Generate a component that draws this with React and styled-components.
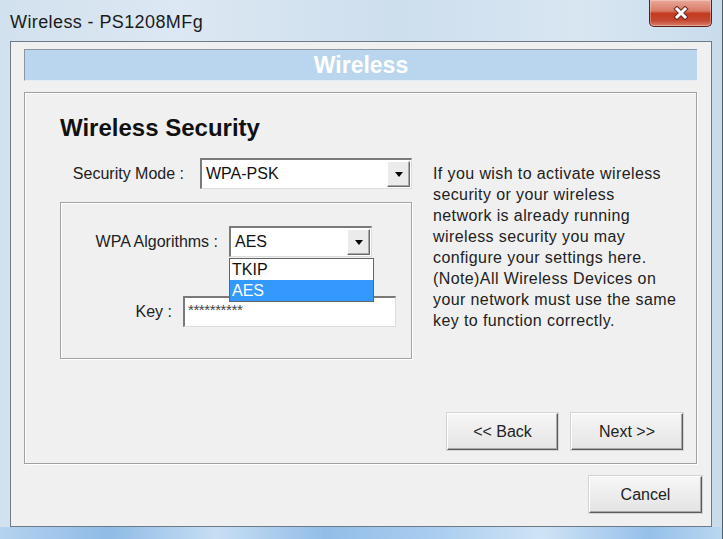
import React from 'react';
import styled, { createGlobalStyle } from 'styled-components';

const Global = createGlobalStyle`
  body {
    margin: 0;
    background: #ffffff;
  }
`;

const Window = styled.div`
  width: 723px;
  height: 539px;
  box-sizing: border-box;
  display: flex;
  flex-direction: column;
  overflow: hidden;
  border-right: 1px solid #55606b;
  background: linear-gradient(90deg, #d2e1ee 0%, #dce8f3 25%, #cddeed 55%, #d8e6f2 80%, #c9dcec 100%);
  font-family: "Liberation Sans", Arial, sans-serif;
`;

const TitleBar = styled.div`
  height: 41px;
  flex-shrink: 0;
  display: flex;
  justify-content: space-between;
  align-items: flex-start;
`;

const Title = styled.div`
  padding: 13px 0 0 10px;
  font-size: 18px;
  line-height: 18px;
  letter-spacing: 0.4px;
  color: #1b1b1b;
`;

const CloseButton = styled.div`
  width: 63px;
  height: 27px;
  margin-right: 10px;
  box-sizing: border-box;
  border: 1px solid #5a2019;
  border-top: none;
  border-radius: 0 0 5px 5px;
  background: linear-gradient(180deg, #e9a899 0%, #d97a67 42%, #c33a20 52%, #c64630 78%, #d8806c 100%);
  box-shadow: inset 0 0 0 1px rgba(255, 255, 255, 0.3);
  display: flex;
  align-items: center;
  justify-content: center;
`;

const Client = styled.div`
  margin: 0 10px;
  height: 486px;
  flex-shrink: 0;
  box-sizing: border-box;
  border: 1px solid #6d7b88;
  background: #f0f0f0;
  padding: 7px 9px 0 13px;
  display: flex;
  flex-direction: column;
`;

const FrameBottom = styled.div`
  flex: 1;
  background: linear-gradient(90deg, #b4d3ef 0%, #8fbbe6 15%, #c7def3 30%, #93bde8 45%, #a9cdef 60%, #cfe3f5 75%, #96c0ea 90%, #b9d7f1 100%);
`;

const Band = styled.div`
  height: 32px;
  margin-right: 5px;
  box-sizing: border-box;
  background: #bad5ee;
  border-top: 1px solid #8b98a4;
  border-left: 1px solid #8b98a4;
  border-bottom: 1px solid #e4edf6;
  color: #ffffff;
  font-weight: bold;
  font-size: 23px;
  display: flex;
  align-items: center;
  justify-content: center;
`;

const Panel = styled.div`
  height: 372px;
  margin: 11px 5px 0 0;
  box-sizing: border-box;
  border: 1px solid #a0a0a0;
  box-shadow: 1px 1px 0 #ffffff, inset 1px 1px 0 #ffffff;
  padding: 21px 13px 13px 35px;
  display: flex;
  flex-direction: column;
`;

const Heading = styled.h1`
  margin: 0 0 16px;
  font-size: 24px;
  line-height: 28px;
  font-weight: bold;
  color: #111111;
`;

const Body = styled.div`
  display: flex;
  align-items: flex-start;
`;

const LeftCol = styled.div`
  width: 352px;
  display: flex;
  flex-direction: column;
`;

const FieldRow = styled.div`
  display: flex;
  align-items: center;
  gap: ${p => p.$gap}px;
  margin-top: ${p => p.$top || 0}px;
`;

const Label = styled.div`
  width: ${p => p.$w}px;
  flex-shrink: 0;
  text-align: right;
  font-size: 16px;
  color: #222222;
  white-space: nowrap;
`;

const SelectBox = styled.div`
  position: relative;
  width: ${p => p.$w}px;
  height: 31px;
  box-sizing: border-box;
  background: #ffffff;
  border-top: 2px solid #7a7a7a;
  border-left: 2px solid #7a7a7a;
  border-right: 1px solid #dcdcdc;
  border-bottom: 1px solid #dcdcdc;
  display: flex;
  align-items: center;
  padding-left: 4px;
  font-size: 16px;
  color: #111111;
`;

const Arrow = styled.div`
  margin-left: auto;
  align-self: stretch;
  width: 23px;
  margin: 1px 1px 1px auto;
  box-sizing: border-box;
  background: #ebebeb;
  border-top: 1px solid #ffffff;
  border-left: 1px solid #ffffff;
  border-right: 1px solid #6a6a6a;
  border-bottom: 1px solid #6a6a6a;
  box-shadow: inset -1px -1px 0 #a8a8a8;
  display: flex;
  align-items: center;
  justify-content: center;

  &::after {
    content: '';
    border-left: 4px solid transparent;
    border-right: 4px solid transparent;
    border-top: 5px solid #000000;
  }
`;

const GroupBox = styled.div`
  margin-top: 13px;
  height: 157px;
  box-sizing: border-box;
  border: 1px solid #a3a3a3;
  box-shadow: 1px 1px 0 #ffffff, inset 1px 1px 0 #ffffff;
  padding-top: 23px;
`;

const ListBox = styled.div`
  position: absolute;
  left: -2px;
  top: 30px;
  width: 145px;
  box-sizing: border-box;
  border: 1px solid #646464;
  background: #ffffff;
  z-index: 2;
`;

const ListItem = styled.div`
  height: 21px;
  line-height: 21px;
  padding-left: 2px;
  font-size: 16px;
  color: ${p => (p.$active ? '#ffffff' : '#111111')};
  background: ${p => (p.$active ? '#3399ff' : '#ffffff')};
`;

const KeyInput = styled.div`
  width: 213px;
  height: 31px;
  box-sizing: border-box;
  background: #ffffff;
  border-top: 2px solid #7a7a7a;
  border-left: 2px solid #7a7a7a;
  border-right: 1px solid #dcdcdc;
  border-bottom: 1px solid #dcdcdc;
  padding: 3px 0 0 3px;
  font-size: 15px;
  line-height: 17px;
  letter-spacing: -0.4px;
  color: #444444;
`;

const HelpText = styled.p`
  margin: 5px 0 0 21px;
  font-size: 16px;
  line-height: 21px;
  letter-spacing: 0.4px;
  color: #222222;
  white-space: nowrap;
`;

const ButtonRow = styled.div`
  margin-top: auto;
  display: flex;
  justify-content: flex-end;
  gap: 13px;
`;

const Button = styled.div`
  width: ${p => p.$w}px;
  height: 37px;
  box-sizing: border-box;
  background: linear-gradient(180deg, #f6f6f6 0%, #ededed 50%, #e4e4e4 100%);
  border-top: 1px solid #ffffff;
  border-left: 1px solid #ffffff;
  border-right: 1px solid #5c5c5c;
  border-bottom: 1px solid #5c5c5c;
  box-shadow: inset -1px -1px 0 #a9a9a9, 0 0 0 1px #d4d4d4;
  display: flex;
  align-items: center;
  justify-content: center;
  font-size: 16px;
  color: #222222;
`;

const Footer = styled.div`
  margin-top: 12px;
  display: flex;
  justify-content: flex-end;
`;

const CloseIcon = () => (
  <svg width="16" height="14" viewBox="0 0 16 14">
    <path d="M4 3 L12 11 M12 3 L4 11" stroke="#6b2a20" strokeWidth="5" strokeLinecap="square" />
    <path d="M4 3 L12 11 M12 3 L4 11" stroke="#ffffff" strokeWidth="3" strokeLinecap="square" />
  </svg>
);

const helpLines = [
  'If you wish to activate wireless',
  'security or your wireless',
  'network is already running',
  'wireless security you may',
  'configure your settings here.',
  '(Note)All Wireless Devices on',
  'your network must use the same',
  'key to function correctly.',
];

export default function App() {
  return (
    <>
      <Global />
      <Window>
        <TitleBar>
          <Title>Wireless - PS1208MFg</Title>
          <CloseButton>
            <CloseIcon />
          </CloseButton>
        </TitleBar>
        <Client>
          <Band>Wireless</Band>
          <Panel>
            <Heading>Wireless Security</Heading>
            <Body>
              <LeftCol>
                <FieldRow $gap={16}>
                  <Label $w={124}>Security Mode :</Label>
                  <SelectBox $w={213}>
                    WPA-PSK
                    <Arrow />
                  </SelectBox>
                </FieldRow>
                <GroupBox>
                  <FieldRow $gap={11}>
                    <Label $w={157}>WPA Algorithms :</Label>
                    <SelectBox $w={143}>
                      AES
                      <Arrow />
                      <ListBox>
                        <ListItem>TKIP</ListItem>
                        <ListItem $active>AES</ListItem>
                      </ListBox>
                    </SelectBox>
                  </FieldRow>
                  <FieldRow $gap={11} $top={39}>
                    <Label $w={111}>Key :</Label>
                    <KeyInput>**********</KeyInput>
                  </FieldRow>
                </GroupBox>
              </LeftCol>
              <HelpText>
                {helpLines.map((line, i) => (
                  <React.Fragment key={i}>
                    {line}
                    {i < helpLines.length - 1 && <br />}
                  </React.Fragment>
                ))}
              </HelpText>
            </Body>
            <ButtonRow>
              <Button $w={111}>&lt;&lt; Back</Button>
              <Button $w={112}>Next &gt;&gt;</Button>
            </ButtonRow>
          </Panel>
          <Footer>
            <Button $w={113}>Cancel</Button>
          </Footer>
        </Client>
        <FrameBottom />
      </Window>
    </>
  );
}
